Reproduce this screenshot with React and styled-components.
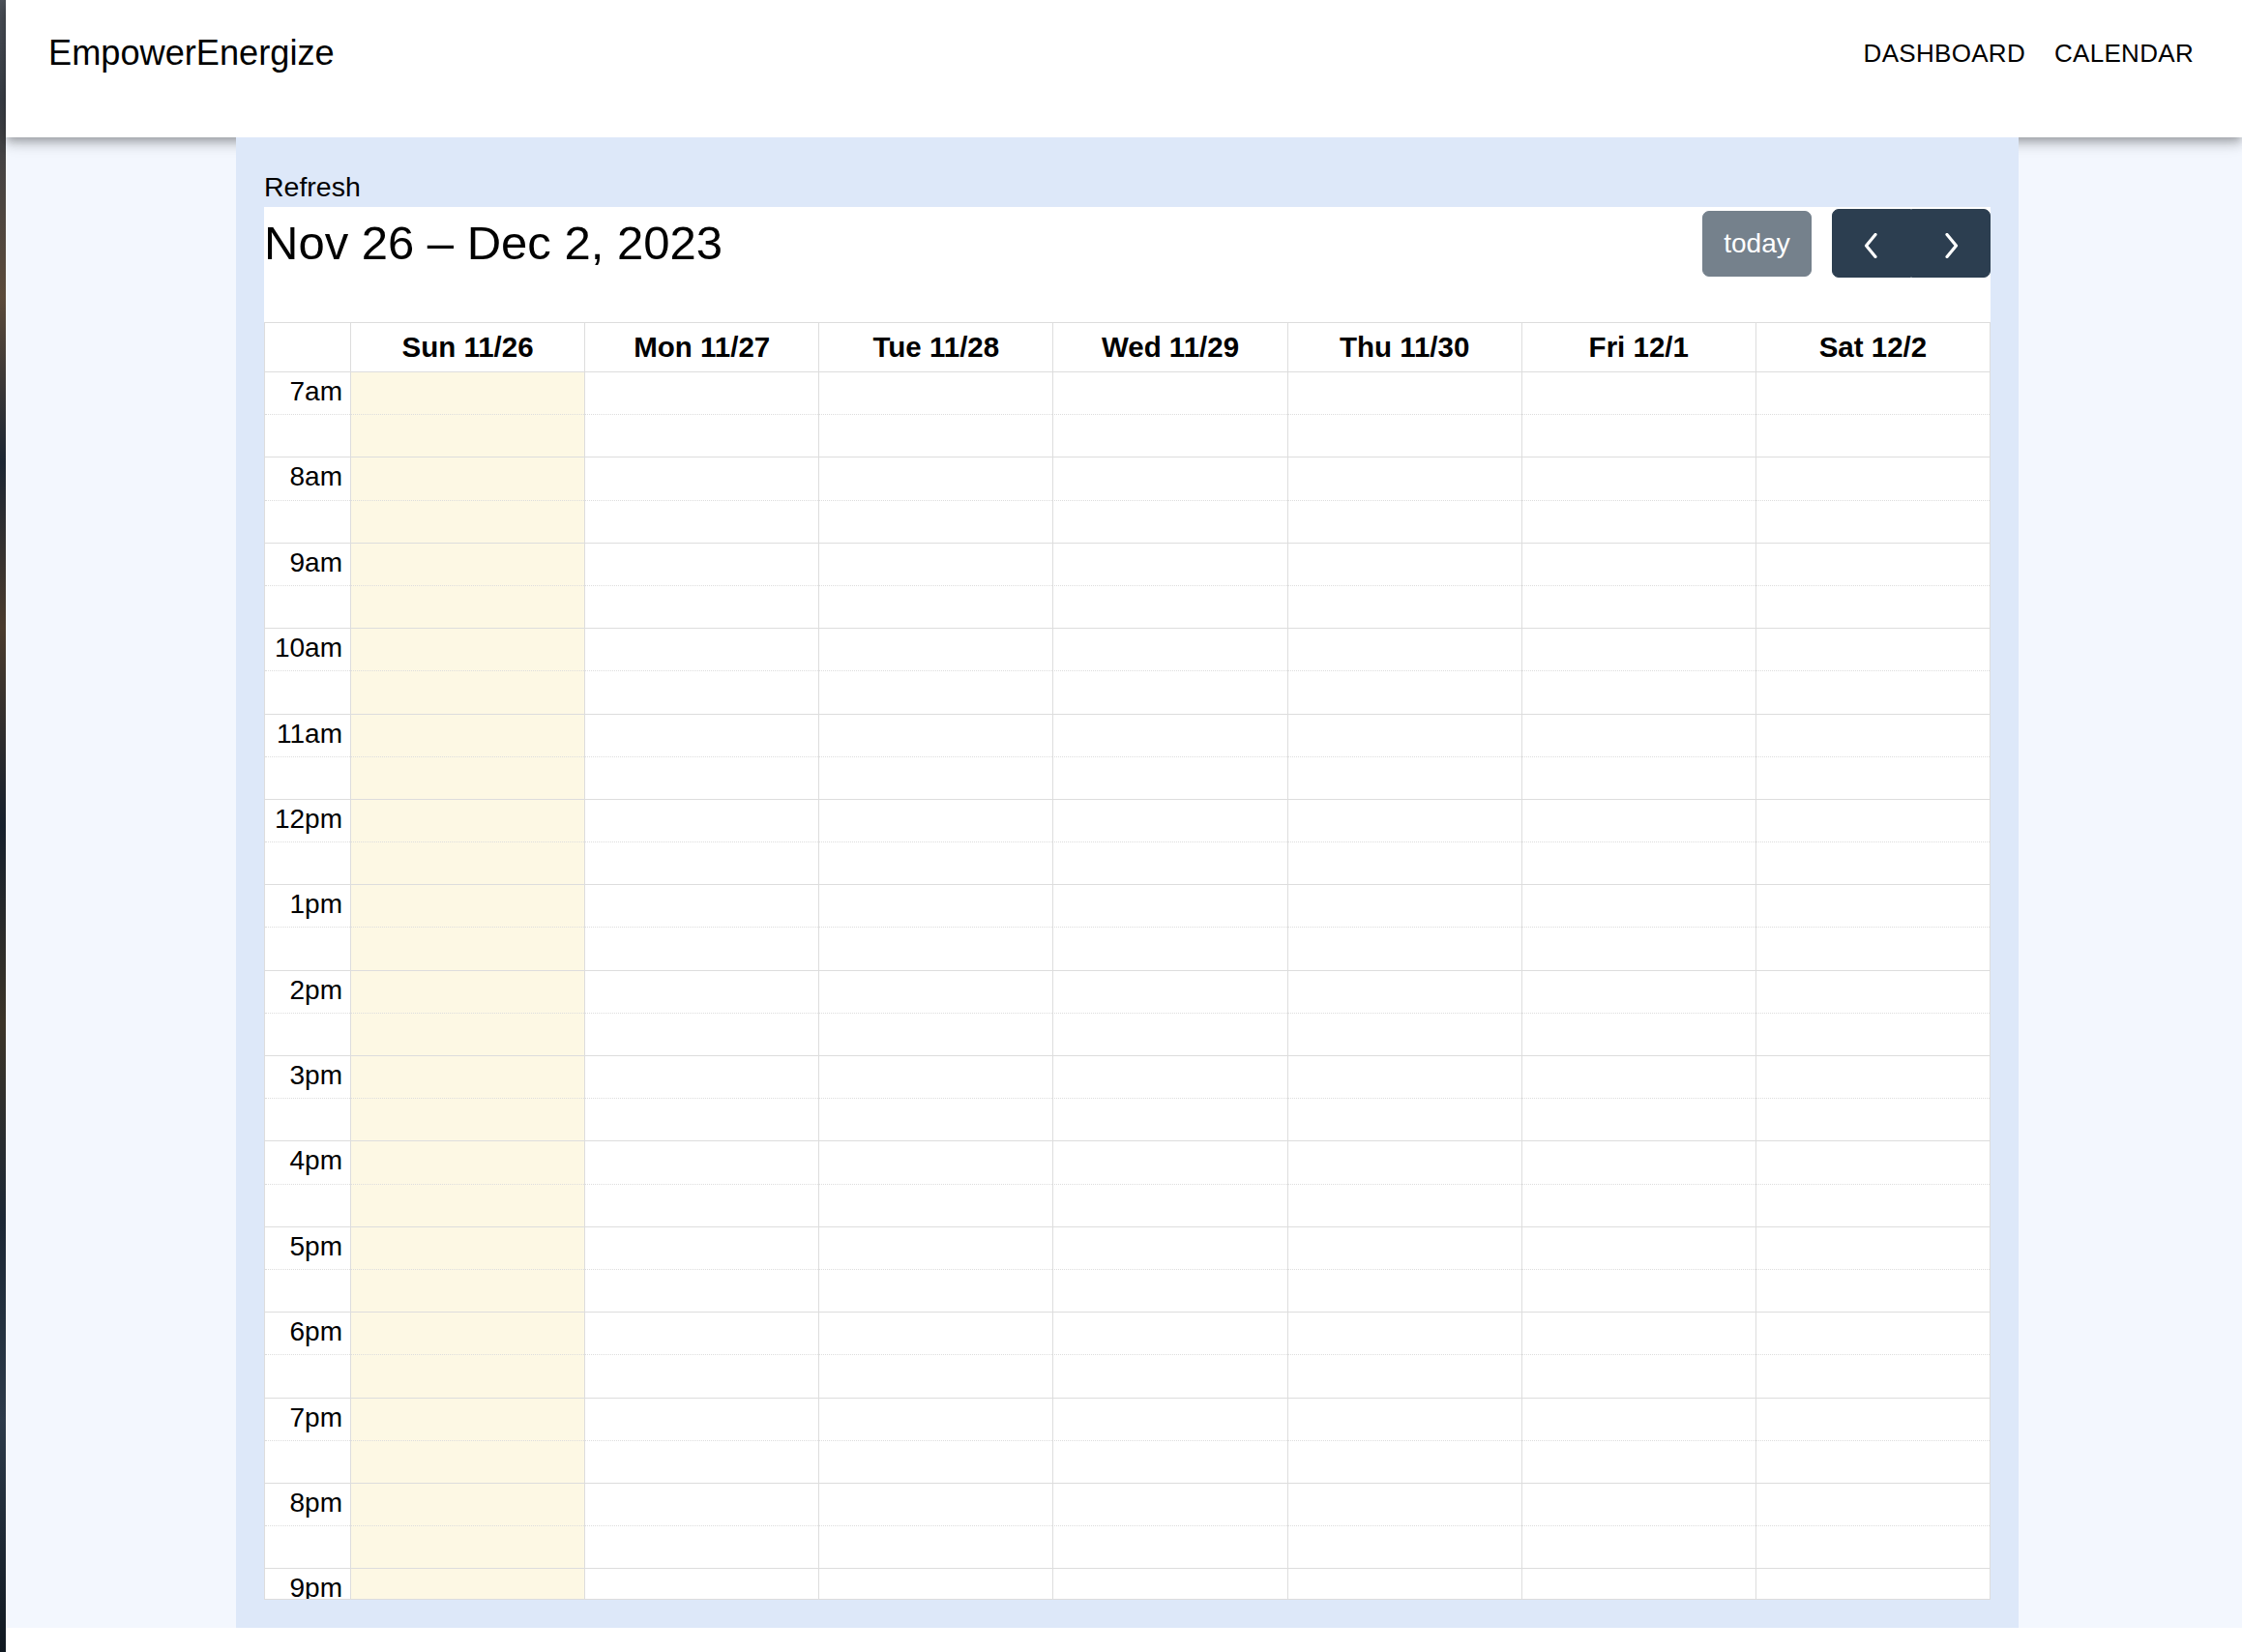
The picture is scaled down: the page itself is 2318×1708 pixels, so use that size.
import React from 'react';
import styled, { createGlobalStyle } from 'styled-components';

const GlobalStyle = createGlobalStyle`
  html, body {
    margin: 0;
    padding: 0;
    background: #fff;
  }
  body {
    font-family: "Liberation Sans", Arial, Helvetica, sans-serif;
    color: #000;
  }
  * {
    box-sizing: border-box;
  }
`;

const days = [
  { label: 'Sun 11/26', today: true },
  { label: 'Mon 11/27' },
  { label: 'Tue 11/28' },
  { label: 'Wed 11/29' },
  { label: 'Thu 11/30' },
  { label: 'Fri 12/1' },
  { label: 'Sat 12/2' },
];

const hours = [
  '7am', '8am', '9am', '10am', '11am', '12pm', '1pm', '2pm',
  '3pm', '4pm', '5pm', '6pm', '7pm', '8pm', '9pm',
];

function Chevron({ dir }) {
  const points = dir === 'left' ? '12,1.5 2.5,13 12,24.5' : '4,1.5 13.5,13 4,24.5';
  return (
    <svg width="16" height="26" viewBox="0 0 16 26" fill="none">
      <polyline
        points={points}
        stroke="#fff"
        strokeWidth="3.2"
        strokeLinecap="round"
        strokeLinejoin="round"
      />
    </svg>
  );
}

function App() {
  return (
    <Screen>
      <GlobalStyle />
      <Wallpaper />
      <Window>
        <Header>
          <Brand>EmpowerEnergize</Brand>
          <Nav>
            <NavLink>DASHBOARD</NavLink>
            <NavLink>CALENDAR</NavLink>
          </Nav>
        </Header>
        <Page>
          <Panel>
            <RefreshLabel>Refresh</RefreshLabel>
            <Calendar>
              <Toolbar>
                <Title>Nov 26 – Dec 2, 2023</Title>
                <Controls>
                  <TodayButton disabled>today</TodayButton>
                  <ButtonGroup>
                    <ArrowButton $first aria-label="prev">
                      <Chevron dir="left" />
                    </ArrowButton>
                    <ArrowButton aria-label="next">
                      <Chevron dir="right" />
                    </ArrowButton>
                  </ButtonGroup>
                </Controls>
              </Toolbar>
              <GridFrame>
                <HeadRow>
                  <HeadCell $axis />
                  {days.map((d) => (
                    <HeadCell key={d.label}>{d.label}</HeadCell>
                  ))}
                </HeadRow>
                <Body>
                  <SlotGrid>
                    {hours.map((h) => (
                      <React.Fragment key={h}>
                        <LabelCell>{h}</LabelCell>
                        {days.map((d) => (
                          <SlotCell key={d.label} $today={d.today} />
                        ))}
                        <LabelCell $minor />
                        {days.map((d) => (
                          <SlotCell key={d.label + '-half'} $today={d.today} $minor />
                        ))}
                      </React.Fragment>
                    ))}
                  </SlotGrid>
                </Body>
              </GridFrame>
            </Calendar>
          </Panel>
        </Page>
      </Window>
    </Screen>
  );
}

const Screen = styled.div`
  display: flex;
  min-height: 1708px;
`;

const Wallpaper = styled.div`
  width: 6px;
  flex-shrink: 0;
  background: linear-gradient(
    180deg,
    #4d525a 0%,
    #3a3f47 6%,
    #5b4a3a 18%,
    #1c2633 28%,
    #4a3b2d 38%,
    #16202d 50%,
    #3b3428 62%,
    #1b2735 74%,
    #2c3a4a 86%,
    #101820 100%
  );
`;

const Window = styled.div`
  flex: 1;
  background: #fff;
`;

const Header = styled.header`
  position: relative;
  z-index: 1;
  height: 142px;
  display: flex;
  justify-content: space-between;
  align-items: flex-start;
  padding: 26px 50px 0 44px;
  background: #fff;
  box-shadow: 0 4px 8px -2px rgba(0, 0, 0, 0.2), 0 8px 10px 0 rgba(0, 0, 0, 0.14),
    0 2px 20px 0 rgba(0, 0, 0, 0.12);
`;

const Brand = styled.div`
  font-size: 36.2px;
  line-height: 58px;
`;

const Nav = styled.nav`
  display: flex;
  gap: 30px;
`;

const NavLink = styled.span`
  font-size: 26px;
  line-height: 58px;
  letter-spacing: 0.3px;
`;

const Page = styled.main`
  background: #f3f7fe;
  padding-left: 238px;
`;

const Panel = styled.section`
  position: relative;
  z-index: 2;
  width: 1843px;
  background: #dde8f9;
  padding: 30px 29px 29px;
`;

const RefreshLabel = styled.div`
  font-size: 28.5px;
  line-height: 42px;
`;

const Calendar = styled.div`
  background: #fff;
`;

const Toolbar = styled.div`
  display: flex;
  justify-content: space-between;
  align-items: center;
  height: 73px;
  padding-top: 2px;
  margin-bottom: 46px;
`;

const Title = styled.h2`
  margin: 0;
  font-size: 49px;
  font-weight: 400;
  line-height: 1.2;
`;

const Controls = styled.div`
  display: flex;
  align-items: center;
  gap: 21px;
`;

const TodayButton = styled.button`
  height: 68px;
  width: 113px;
  padding: 0;
  font-family: inherit;
  font-size: 28px;
  color: #fff;
  background: #2c3e50;
  border: 1px solid #2c3e50;
  border-radius: 7px;
  opacity: 0.65;
`;

const ButtonGroup = styled.div`
  display: flex;
  height: 71px;
`;

const ArrowButton = styled.button`
  width: 82px;
  height: 100%;
  display: flex;
  align-items: center;
  justify-content: center;
  padding: 4px 0 0;
  background: #2c3e50;
  border: 1px solid #2c3e50;
  border-radius: ${(p) => (p.$first ? '7px 0 0 7px' : '0 7px 7px 0')};
`;

const GridFrame = styled.div`
  border: 1px solid #ddd;
`;

const HeadRow = styled.div`
  display: grid;
  grid-template-columns: 88px repeat(7, minmax(0, 1fr));
`;

const HeadCell = styled.div`
  height: 50px;
  display: flex;
  align-items: center;
  justify-content: center;
  font-size: 29.5px;
  font-weight: 700;
  border-left: ${(p) => (p.$axis ? 'none' : '1px solid #ddd')};
`;

const Body = styled.div`
  height: 1269px;
  overflow: hidden;
`;

const SlotGrid = styled.div`
  display: grid;
  grid-template-columns: 88px repeat(7, minmax(0, 1fr));
  grid-auto-rows: 44.2px;
`;

const LabelCell = styled.div`
  border-top: 1px ${(p) => (p.$minor ? 'dotted' : 'solid')} #ddd;
  padding-right: 8px;
  text-align: right;
  font-size: 28px;
  line-height: 40px;
  white-space: nowrap;
`;

const SlotCell = styled.div`
  border-top: 1px ${(p) => (p.$minor ? 'dotted' : 'solid')} #ddd;
  border-left: 1px solid #ddd;
  background: ${(p) => (p.$today ? '#fdf8e4' : '#fff')};
`;

export default App;
